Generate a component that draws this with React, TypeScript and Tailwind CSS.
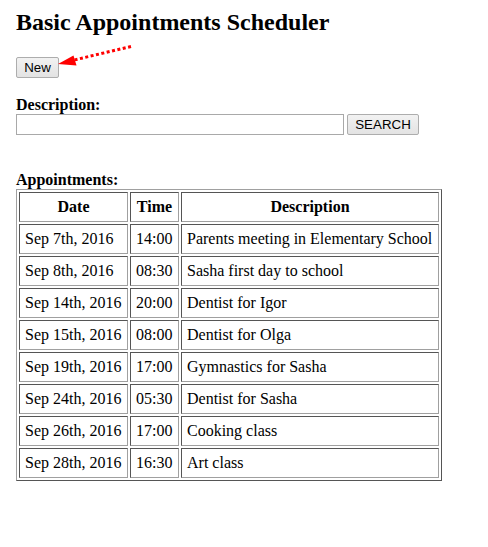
import React from "react";

type Appointment = {
  date: string;
  time: string;
  description: string;
};

const APPOINTMENTS: Appointment[] = [
  { date: "Sep 7th, 2016", time: "14:00", description: "Parents meeting in Elementary School" },
  { date: "Sep 8th, 2016", time: "08:30", description: "Sasha first day to school" },
  { date: "Sep 14th, 2016", time: "20:00", description: "Dentist for Igor" },
  { date: "Sep 15th, 2016", time: "08:00", description: "Dentist for Olga" },
  { date: "Sep 19th, 2016", time: "17:00", description: "Gymnastics for Sasha" },
  { date: "Sep 24th, 2016", time: "05:30", description: "Dentist for Sasha" },
  { date: "Sep 26th, 2016", time: "17:00", description: "Cooking class" },
  { date: "Sep 28th, 2016", time: "16:30", description: "Art class" },
];

// old-school inset cell border (like <table border="1">)
const cell =
  "border border-t-[#555] border-l-[#555] border-b-[#a0a0a0] border-r-[#a0a0a0] p-[5px] align-middle";

const btn =
  "flex items-center justify-center h-[21px] rounded-[2px] border border-[#adadad] bg-gradient-to-b from-[#f2f2f2] to-[#e3e3e3] font-['Liberation_Sans',Arial,sans-serif] text-[13.33px] text-black";

function Arrow() {
  return (
    <svg
      className="pointer-events-none absolute left-0 top-0"
      width="160"
      height="80"
      viewBox="0 0 160 80"
    >
      <line
        x1="131"
        y1="46.5"
        x2="72"
        y2="60.5"
        stroke="#ff0000"
        strokeWidth="3"
        strokeDasharray="3 2.5"
      />
      <polygon points="58,64 73.5,55.5 76.5,65.5" fill="#ff0000" />
    </svg>
  );
}

export default function App() {
  return (
    <div className="relative min-h-screen bg-white pl-4 pt-2 font-['Liberation_Serif','Times_New_Roman',serif] text-[16px] leading-[18px] text-black">
      <h1 className="text-[24px] font-bold leading-[28px]">Basic Appointments Scheduler</h1>

      <button className={`${btn} mt-[21px] w-[43px]`}>New</button>

      <div className="mt-[18px] font-bold">Description:</div>
      <div className="flex gap-[3px]">
        <input className="h-[21px] w-[328px] border border-[#a9a9a9] bg-white px-[2px] outline-none" />
        <button className={`${btn} w-[72px]`}>SEARCH</button>
      </div>

      <div className="mt-9 font-bold">Appointments:</div>
      <table className="w-[426px] border-separate border-spacing-[2px] border border-t-[#a0a0a0] border-l-[#a0a0a0] border-b-[#555] border-r-[#555]">
        <thead>
          <tr>
            <th className={`${cell} w-[109px] text-center font-bold`}>Date</th>
            <th className={`${cell} w-[49px] text-center font-bold`}>Time</th>
            <th className={`${cell} w-[258px] text-center font-bold`}>Description</th>
          </tr>
        </thead>
        <tbody>
          {APPOINTMENTS.map((a) => (
            <tr key={a.date + a.time}>
              <td className={`${cell} whitespace-nowrap`}>{a.date}</td>
              <td className={cell}>{a.time}</td>
              <td className={`${cell} whitespace-nowrap`}>{a.description}</td>
            </tr>
          ))}
        </tbody>
      </table>

      <Arrow />
    </div>
  );
}
